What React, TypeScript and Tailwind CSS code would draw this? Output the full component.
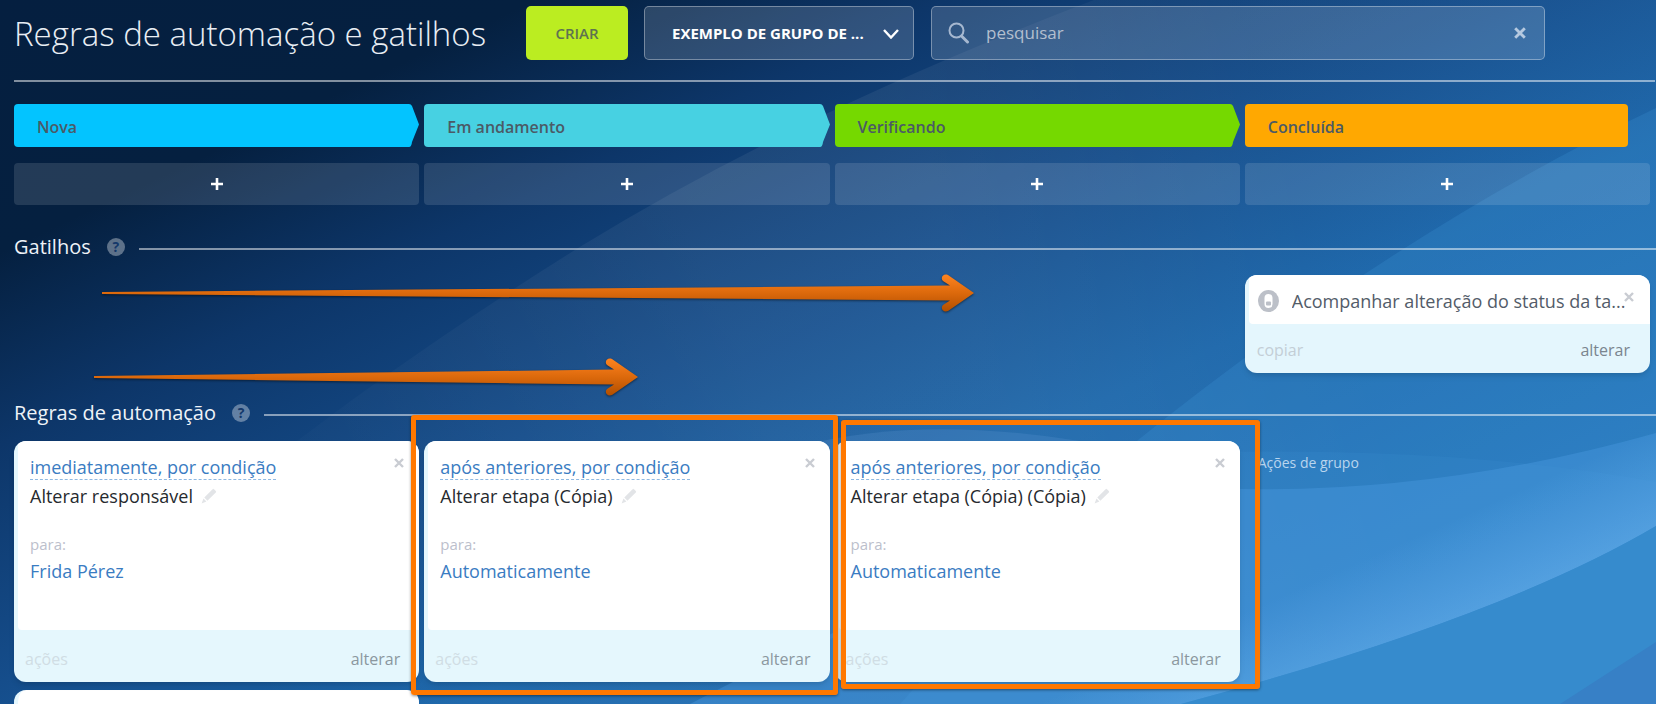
import React from 'react';

interface Rule {
  when: string;
  name: string;
  target: string;
  highlight?: string;
}

const stages = [
  { name: 'Nova', color: 'text-[#03c4ff]' },
  { name: 'Em andamento', color: 'text-[#47d1e2]' },
  { name: 'Verificando', color: 'text-[#75d900]' },
  { name: 'Concluída', color: 'text-[#ffa801]' },
];

const rules: Rule[] = [
  { when: 'imediatamente, por condição', name: 'Alterar responsável', target: 'Frida Pérez' },
  {
    when: 'após anteriores, por condição',
    name: 'Alterar etapa (Cópia)',
    target: 'Automaticamente',
    highlight: '-left-[13px] -right-2 -top-[26px] -bottom-[13px]',
  },
  {
    when: 'após anteriores, por condição',
    name: 'Alterar etapa (Cópia) (Cópia)',
    target: 'Automaticamente',
    highlight: 'left-[6px] -right-5 -top-[21px] -bottom-[7px]',
  },
];

const Background: React.FC = () => (
  <svg
    className="absolute inset-0 -z-10 h-full w-full"
    viewBox="0 0 1656 704"
    preserveAspectRatio="none"
    aria-hidden="true"
  >
    <defs>
      <linearGradient id="sky" gradientUnits="userSpaceOnUse" x1="0" y1="0" x2="572" y2="1214">
        <stop offset="0" stopColor="#051f40" />
        <stop offset="0.17" stopColor="#052040" />
        <stop offset="0.3" stopColor="#0d3669" />
        <stop offset="0.46" stopColor="#154d8b" />
        <stop offset="0.62" stopColor="#1b66aa" />
        <stop offset="0.8" stopColor="#2272b8" />
        <stop offset="1" stopColor="#2c7fc8" />
      </linearGradient>
      <linearGradient id="beam" gradientUnits="userSpaceOnUse" x1="200" y1="560" x2="1300" y2="200">
        <stop offset="0" stopColor="#fff" stopOpacity="0" />
        <stop offset="0.5" stopColor="#fff" stopOpacity="0.06" />
        <stop offset="0.7" stopColor="#fff" stopOpacity="0.06" />
        <stop offset="1" stopColor="#fff" stopOpacity="0.02" />
      </linearGradient>
      <linearGradient id="glow" gradientUnits="userSpaceOnUse" x1="1385" y1="550" x2="1425" y2="640">
        <stop offset="0" stopColor="#6cb4ee" stopOpacity="0" />
        <stop offset="1" stopColor="#6cb4ee" stopOpacity="0.5" />
      </linearGradient>
    </defs>
    <rect width="1656" height="704" fill="url(#sky)" />
    <path d="M1094 0 Q800 112 583 245 Q470 315 352 400 Q180 530 0 640 V704 H1656 V0Z" fill="url(#beam)" />
    <path d="M1656 108 Q1400 230 1138 440 L900 704 H1656Z" fill="#48a0e0" fillOpacity="0.2" />
    <path d="M800 446 Q920 415 1080 441 Q1180 470 1239 488 L800 650Z" fill="#6aa0dc" fillOpacity="0.2" />
    <path d="M1180 453 Q1450 445 1656 482 V704 H1180Z" fill="#4a9be0" fillOpacity="0.12" />
    <path d="M690 704 Q850 620 1160 485 Q1400 505 1656 433 V704Z" fill="#4a9be0" fillOpacity="0.4" />
    <path d="M850 760 L1100 725 Q1480 630 1656 526 V400 H850Z" fill="url(#glow)" />
    <path d="M1100 725 Q1480 630 1656 526 V704Z" fill="#368bcd" />
    <path d="M1560 704 L1656 642 V704Z" fill="#3780c6" />
  </svg>
);

const CloseIcon: React.FC<{ className?: string }> = ({ className }) => (
  <svg className={className} viewBox="0 0 10 10" fill="none" stroke="currentColor" strokeWidth="2.4" aria-hidden="true">
    <path d="M1 1l8 8M9 1l-8 8" />
  </svg>
);

const PencilIcon: React.FC = () => (
  <svg className="h-4 w-4" viewBox="0 0 16 16" fill="currentColor" aria-hidden="true">
    <path d="M11.6 1.2a1 1 0 0 1 1.4 0l1.8 1.8a1 1 0 0 1 0 1.4l-8.4 8.3-3.1-3.1zM2.5 10.6l2.9 2.9L.6 15.4z" />
  </svg>
);

const StageHeader: React.FC<{ name: string; color: string; last: boolean }> = ({ name, color, last }) => (
  <div className={`flex h-[43px] ${color} ${last ? 'mr-[22px]' : ''}`}>
    <div className={`flex flex-1 items-center bg-current pl-[23px] ${last ? 'rounded-[4px]' : 'rounded-l-[4px]'}`}>
      <span className="pt-[3px] text-[16px] leading-5 font-semibold text-[#4b5a66]">{name}</span>
    </div>
    {!last && (
      <svg className="-ml-px h-full w-[11px]" viewBox="0 0 11 43" fill="currentColor" aria-hidden="true">
        <path d="M0 0h1q2 0 3 2l7 18.500-7 17.500q-.5 5-3 5H0z" />
      </svg>
    )}
  </div>
);

const SectionTitle: React.FC<{ title: string }> = ({ title }) => (
  <div className="flex h-8 items-center pl-[14px]">
    <h2 className="text-[20px] leading-8 text-[#eef3f8]">{title}</h2>
    <button
      type="button"
      aria-label={`Ajuda: ${title}`}
      className="ml-4 h-[18px] w-[18px] rounded-full bg-white/35 text-[14px] leading-[18px] font-bold text-[#14386a]"
    >
      ?
    </button>
    <div className="mt-1 ml-[14px] h-[2px] flex-1 bg-white/50" />
  </div>
);

const TriggerCard: React.FC = () => (
  <div className="relative overflow-hidden rounded-[12px] bg-[#e4f6fd] pl-1 shadow-md">
    <div className="flex h-[49px] items-center rounded-bl-[4px] bg-white pt-[2px] pr-4 pl-[9px]">
      <svg className="mr-[13px] h-[22px] w-[21px] shrink-0" viewBox="0 0 21 22" aria-hidden="true">
        <ellipse cx="10.500" cy="11" rx="10.500" ry="11" fill="#bcc0c8" />
        <rect x="6.500" y="4" width="8" height="14" rx="4" fill="#fff" />
        <rect x="8" y="11.500" width="5" height="4" rx="1" fill="#bcc0c8" />
      </svg>
      <span className="truncate text-[18px] leading-6 text-[#535c69]">Acompanhar alteração do status da ta...</span>
    </div>
    <button type="button" aria-label="Remover gatilho" className="absolute top-[17px] right-4 text-[#c9ccd2]">
      <CloseIcon className="h-[10px] w-[10px]" />
    </button>
    <div className="flex h-[49px] items-center justify-between pt-[3px] pr-5 pl-2 text-[16px]">
      <a href="#copiar" className="text-[#c3ced6]">copiar</a>
      <a href="#alterar" className="text-[#7a858f]">alterar</a>
    </div>
  </div>
);

const RuleCard: React.FC<{ rule: Rule }> = ({ rule }) => (
  <div className="relative">
    <div className="overflow-hidden rounded-[12px] bg-[#e5f7fd] pl-1 shadow-md">
      <div className="h-[189px] rounded-bl-[4px] bg-white px-3 pt-[14px]">
        <a
          href="#quando"
          className="inline-block border-b border-dashed border-[#8fb9e2] text-[18px] leading-6 text-[#3a7cc2]"
        >
          {rule.when}
        </a>
        <div className="flex items-center text-[18px] leading-8 text-[#262a2e]">
          {rule.name}
          <button type="button" aria-label="Editar nome" className="ml-2 text-[#e2e4e7]">
            <PencilIcon />
          </button>
        </div>
        <div className="mt-5 text-[15px] leading-6 text-[#bcc0cc]">para:</div>
        <a href="#responsavel" className="block text-[18px] leading-[30px] text-[#3a7cc2]">{rule.target}</a>
      </div>
      <div className="flex h-[52px] items-center justify-between pt-[5px] pr-[19px] pl-[7px] text-[16px]">
        <a href="#acoes" className="text-[#d0dde4]">ações</a>
        <a href="#alterar" className="text-[#8b979f]">alterar</a>
      </div>
    </div>
    <button type="button" aria-label="Remover regra" className="absolute top-[17px] right-[15px] text-[#c9ccd2]">
      <CloseIcon className="h-[10px] w-[10px]" />
    </button>
    {rule.highlight && (
      <div
        className={`pointer-events-none absolute z-10 rounded-[3px] border-[5px] border-[#ff7800] shadow-[0_1px_3px_rgba(0,0,0,0.45)] ${rule.highlight}`}
      />
    )}
  </div>
);

// Tapered annotation arrow, drawn over the board
const Arrow: React.FC<{ length: number; className: string }> = ({ length, className }) => (
  <svg
    className={`pointer-events-none absolute overflow-visible drop-shadow-[0_1px_1px_rgba(0,0,0,0.5)] ${className}`}
    width={length}
    height="38"
    aria-hidden="true"
  >
    <defs>
      <linearGradient id={`arrow-${length}`} gradientUnits="userSpaceOnUse" x1="0" y1="0" x2="0" y2="38">
        <stop offset="0" stopColor="#ff8420" />
        <stop offset="0.5" stopColor="#dc690c" />
        <stop offset="1" stopColor="#b04e00" />
      </linearGradient>
    </defs>
    <path
      fill={`url(#arrow-${length})`}
      d={`M0 18L${length - 24} 11.500L${length - 31} 7C${length - 34} 4 ${length - 31} -1 ${length - 26} 1L${length} 19L${length - 26} 37C${length - 31} 39 ${length - 34} 34 ${length - 31} 31L${length - 24} 26.500L0 20Z`}
    />
  </svg>
);

const App: React.FC = () => {
  return (
    <div className="relative isolate h-screen overflow-hidden font-['Open_Sans','Noto_Sans',sans-serif]">
      <Background />

      <header className="flex items-center pt-[6px] pr-[111px] pl-[14px]">
        <h1 className="w-[512px] shrink-0 pt-[2px] text-[33px] leading-[52px] font-light whitespace-nowrap text-[#e9eef4]">
          Regras de automação e gatilhos
        </h1>
        <button
          type="button"
          className="h-[54px] w-[102px] shrink-0 rounded-[5px] bg-[#bbed21] text-[15px] font-semibold text-[#5f7350]"
        >
          CRIAR
        </button>
        <div className="relative ml-4 w-[270px] shrink-0">
          <select
            aria-label="Grupo de trabalho"
            className="h-[54px] w-full appearance-none rounded-[5px] border border-white/35 bg-white/15 pl-[27px] text-[15px] font-bold text-white"
          >
            <option>EXEMPLO DE GRUPO DE ...</option>
          </select>
          <svg
            className="pointer-events-none absolute top-[23px] right-[15px] h-[10px] w-4"
            viewBox="0 0 16 10"
            fill="none"
            stroke="#fff"
            strokeWidth="2.4"
            aria-hidden="true"
          >
            <path d="M1 1l7 7.500L15 1" />
          </svg>
        </div>
        <div className="ml-[17px] flex h-[54px] flex-1 items-center rounded-[5px] border border-white/35 bg-white/15 pr-[18px] pl-4">
          <svg className="h-[22px] w-[22px] shrink-0 text-[#a6b8d0]" viewBox="0 0 22 22" fill="none" stroke="currentColor" aria-hidden="true">
            <circle cx="8.500" cy="8.500" r="7" strokeWidth="2" />
            <path d="M13.500 14l6 6" strokeWidth="3" strokeLinecap="round" />
          </svg>
          <input
            type="text"
            aria-label="pesquisar"
            placeholder="pesquisar"
            className="ml-4 min-w-0 flex-1 bg-transparent text-[17px] text-white outline-none placeholder:text-[#b3bfcf]"
          />
          <button type="button" aria-label="Limpar pesquisa" className="text-[#b5c9e0]">
            <CloseIcon className="h-3 w-3" />
          </button>
        </div>
      </header>
      <div className="mt-5 mr-px ml-[14px] h-[2px] bg-white/50" />

      <div className="mt-[22px] grid grid-cols-4 gap-x-[5px] gap-y-4 pr-[6px] pl-[14px]">
        {stages.map((stage, i) => (
          <StageHeader key={stage.name} name={stage.name} color={stage.color} last={i === stages.length - 1} />
        ))}
        {stages.map((stage) => (
          <button
            key={stage.name}
            type="button"
            aria-label={`Adicionar em ${stage.name}`}
            className="flex h-[42px] items-center justify-center rounded-[4px] bg-white/12 text-white"
          >
            <svg className="h-3 w-3" viewBox="0 0 12 12" stroke="currentColor" strokeWidth="2.600" aria-hidden="true">
              <path d="M6 0v12M0 6h12" />
            </svg>
          </button>
        ))}
      </div>

      <section className="relative mt-[26px]">
        <SectionTitle title="Gatilhos" />
        <div className="mt-3 grid grid-cols-4 gap-x-[5px] pr-[6px] pl-[14px]">
          <div className="col-start-4">
            <TriggerCard />
          </div>
        </div>
        <Arrow length={872} className="top-[43px] left-[102px]" />
        <Arrow length={544} className="top-[127px] left-[94px]" />
      </section>

      <section className="mt-6">
        <SectionTitle title="Regras de automação" />
        <div className="mt-3 grid grid-cols-4 gap-x-[5px] gap-y-2 pr-[6px] pl-[14px]">
          {rules.map((rule) => (
            <RuleCard key={rule.name} rule={rule} />
          ))}
          <div className="pt-3 pl-[13px] text-[14px] leading-5 text-[#b9d5ee]">Ações de grupo</div>
          <div className="h-[241px] rounded-[12px] border-l-4 border-[#e5f7fd] bg-white" />
        </div>
      </section>
    </div>
  );
};

export default App;
